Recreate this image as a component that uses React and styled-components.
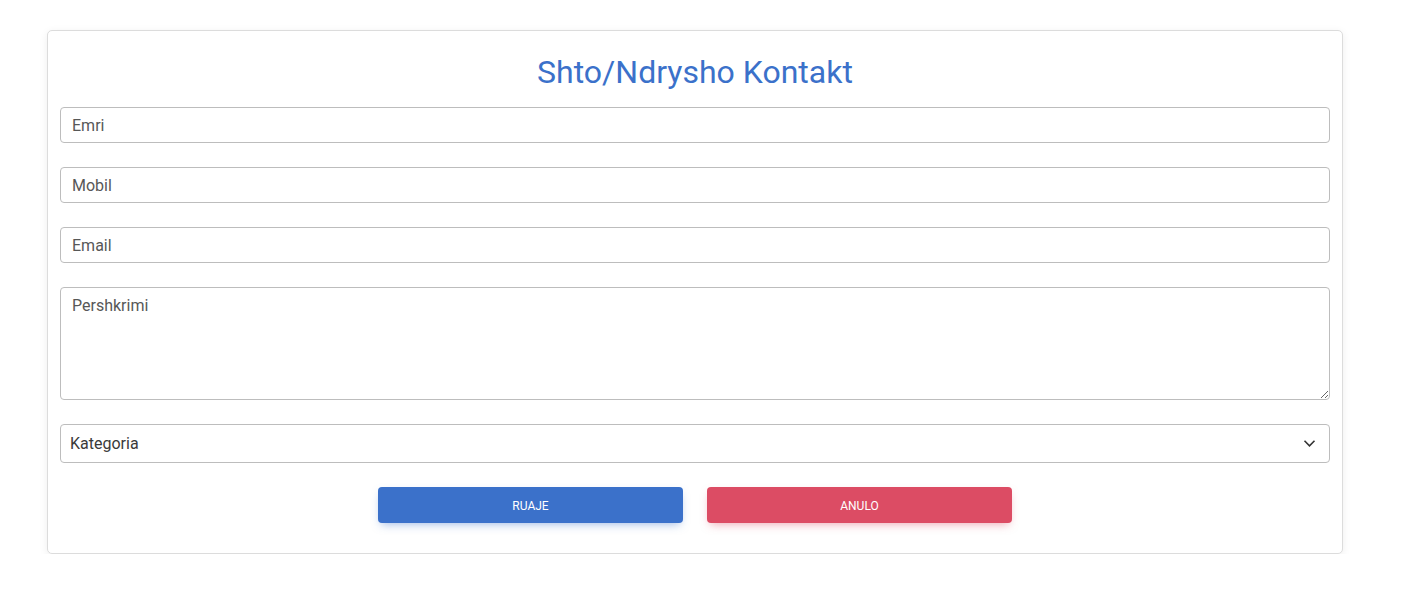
import React from "react";
import styled, { createGlobalStyle } from "styled-components";

const GlobalStyle = createGlobalStyle`
    body {
        margin: 0;
        background: #fff;
        font-family: Roboto, "Liberation Sans", sans-serif;
    }
    * { box-sizing: border-box; }
`;

const Page = styled.div`
    padding: 30px 0 0 47px;
`;

const Card = styled.form`
    width: 1296px;
    background: #fff;
    border: 1px solid #dcdcdc;
    border-radius: 5px;
    box-shadow: 0 2px 8px rgba(0, 0, 0, 0.07);
    padding: 12px 12px 30px;
    display: flex;
    flex-direction: column;
    gap: 24px;
`;

const Title = styled.h3`
    margin: 11px 0 -7px;
    text-align: center;
    font-size: 32px;
    line-height: 36px;
    font-weight: 400;
    color: #3b71ca;
`;

const Field = styled.input`
    width: 100%;
    height: 36px;
    border: 1px solid #bdbdbd;
    border-radius: 4px;
    padding: 0 11px;
    font-family: Roboto, "Liberation Sans", sans-serif;
    font-size: 16px;
    color: #4f4f4f;
    outline: none;
    &::placeholder { color: #575757; }
`;

const Area = styled.textarea`
    width: 100%;
    height: 113px;
    border: 1px solid #bdbdbd;
    border-radius: 4px;
    padding: 8px 11px;
    font-family: Roboto, "Liberation Sans", sans-serif;
    font-size: 16px;
    line-height: 1.2;
    color: #4f4f4f;
    outline: none;
    display: block;
    &::placeholder { color: #575757; }
`;

const SelectWrap = styled.div`
    position: relative;
`;

const Select = styled.select`
    width: 100%;
    height: 39px;
    border: 1px solid #bdbdbd;
    border-radius: 4px;
    padding: 0 9px;
    font-family: Roboto, "Liberation Sans", sans-serif;
    font-size: 16px;
    color: #3a3a3a;
    background: #fff;
    appearance: none;
    outline: none;
`;

const Chevron = styled.svg`
    position: absolute;
    right: 14px;
    top: 15px;
    pointer-events: none;
`;

const Actions = styled.div`
    display: flex;
    justify-content: center;
    gap: 24px;
`;

const Button = styled.button`
    width: 305px;
    height: 36px;
    border: none;
    border-radius: 4px;
    background: ${p => p.$color};
    color: #fff;
    font-family: Roboto, "Liberation Sans", sans-serif;
    font-size: 12px;
    font-weight: 400;
    text-transform: uppercase;
    padding-top: 2px;
    box-shadow: 0 4px 10px -3px ${p => p.$shadow};
    cursor: pointer;
`;

export default function App() {
    return (
        <Page>
            <GlobalStyle />
            <Card onSubmit={e => e.preventDefault()}>
                <Title>Shto/Ndrysho Kontakt</Title>
                <Field placeholder="Emri" />
                <Field placeholder="Mobil" />
                <Field placeholder="Email" />
                <Area placeholder="Pershkrimi" />
                <SelectWrap>
                    <Select defaultValue="">
                        <option value="" disabled>Kategoria</option>
                    </Select>
                    <Chevron width="13" height="9" viewBox="0 0 13 9">
                        <path d="M1.5 1.8 L6.5 6.8 L11.5 1.8" fill="none" stroke="#333" strokeWidth="1.6" />
                    </Chevron>
                </SelectWrap>
                <Actions>
                    <Button $color="#3b71ca" $shadow="rgba(59, 113, 202, 0.5)">Ruaje</Button>
                    <Button type="button" $color="#dc4c64" $shadow="rgba(220, 76, 100, 0.5)">Anulo</Button>
                </Actions>
            </Card>
        </Page>
    );
}
